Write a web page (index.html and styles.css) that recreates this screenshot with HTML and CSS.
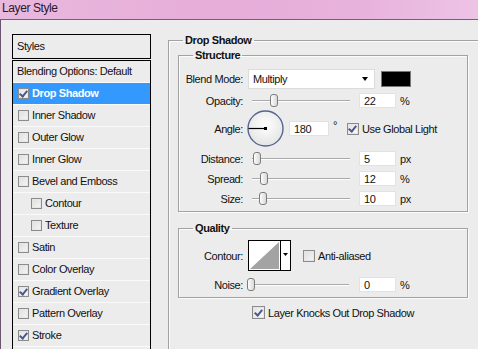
FILE: index.html
```html
<!DOCTYPE html>
<html lang="en">
<head>
    <meta charset="UTF-8">
    <title>Layer Style</title>
    <link rel="stylesheet" href="styles.css">
</head>
<body>
    <div class="window">
        <div class="titlebar">Layer Style</div>
        <div class="dialog">
            <div class="sidebar">
                <div class="styles-head">Styles</div>
                <ul class="styles-list">
                    <li>Blending Options: Default</li>
                    <li class="selected"><span class="check on"></span>Drop Shadow</li>
                    <li><span class="check"></span>Inner Shadow</li>
                    <li><span class="check"></span>Outer Glow</li>
                    <li><span class="check"></span>Inner Glow</li>
                    <li><span class="check"></span>Bevel and Emboss</li>
                    <li class="sub"><span class="check"></span>Contour</li>
                    <li class="sub"><span class="check"></span>Texture</li>
                    <li><span class="check"></span>Satin</li>
                    <li><span class="check"></span>Color Overlay</li>
                    <li><span class="check on"></span>Gradient Overlay</li>
                    <li><span class="check"></span>Pattern Overlay</li>
                    <li><span class="check on"></span>Stroke</li>
                    <li></li>
                </ul>
            </div>

            <div class="content">
                <fieldset class="group outer">
                    <legend>Drop Shadow</legend>

                    <fieldset class="group structure">
                        <legend>Structure</legend>

                        <div class="row blend-row">
                            <span class="lbl">Blend Mode:</span>
                            <div class="select">Multiply<span class="arrow"></span></div>
                            <div class="swatch"></div>
                        </div>

                        <div class="row slider-row">
                            <span class="lbl">Opacity:</span>
                            <div class="slider"><span class="thumb" style="left: 22px"></span></div>
                            <div class="field">22</div>
                            <span class="unit">%</span>
                        </div>

                        <div class="row angle-row">
                            <span class="lbl">Angle:</span>
                            <svg class="dial" width="37" height="37" viewBox="0 0 37 37">
                                <defs>
                                    <radialGradient id="dialFill" cx="50%" cy="40%" r="60%">
                                        <stop offset="0" stop-color="#ffffff"/>
                                        <stop offset="1" stop-color="#e4e4e4"/>
                                    </radialGradient>
                                </defs>
                                <circle cx="18.5" cy="18.5" r="17.5" fill="url(#dialFill)" stroke="#55658f" stroke-width="1.4"/>
                                <line x1="1.5" y1="18.5" x2="18.5" y2="18.5" stroke="#000" stroke-width="1.2"/>
                                <rect x="17" y="17" width="3" height="3" fill="#000"/>
                            </svg>
                            <div class="field wide">180</div>
                            <span class="unit deg">°</span>
                            <span class="check on"></span>
                            <span class="check-text">Use Global Light</span>
                        </div>

                        <div class="row slider-row first">
                            <span class="lbl">Distance:</span>
                            <div class="slider"><span class="thumb" style="left: 5px"></span></div>
                            <div class="field">5</div>
                            <span class="unit">px</span>
                        </div>

                        <div class="row slider-row">
                            <span class="lbl">Spread:</span>
                            <div class="slider"><span class="thumb" style="left: 12px"></span></div>
                            <div class="field">12</div>
                            <span class="unit">%</span>
                        </div>

                        <div class="row slider-row">
                            <span class="lbl">Size:</span>
                            <div class="slider"><span class="thumb" style="left: 11px"></span></div>
                            <div class="field">10</div>
                            <span class="unit">px</span>
                        </div>
                    </fieldset>

                    <fieldset class="group quality">
                        <legend>Quality</legend>

                        <div class="row contour-row">
                            <span class="lbl">Contour:</span>
                            <svg class="contour" width="43" height="31" viewBox="0 0 43 31">
                                <rect x="0.5" y="0.5" width="42" height="30" fill="#fff" stroke="#000"/>
                                <polygon points="2,29 31,2 31,29" fill="#a3a3a3"/>
                                <line x1="32.5" y1="1" x2="32.5" y2="30" stroke="#000"/>
                                <polygon points="35,13 40,13 37.5,16" fill="#000"/>
                            </svg>
                            <span class="check"></span>
                            <span class="check-text">Anti-aliased</span>
                        </div>

                        <div class="row slider-row noise-row">
                            <span class="lbl">Noise:</span>
                            <div class="slider"><span class="thumb" style="left: 0px"></span></div>
                            <div class="field">0</div>
                            <span class="unit">%</span>
                        </div>
                    </fieldset>

                    <div class="knock">
                        <span class="check big on"></span>
                        <span class="check-text">Layer Knocks Out Drop Shadow</span>
                    </div>
                </fieldset>
            </div>
        </div>
    </div>
</body>
</html>
```

FILE: styles.css
```css
html, body {
    margin: 0;
    padding: 0;
}
body {
    width: 478px;
    height: 349px;
    overflow: hidden;
    font-family: "Liberation Sans", Arial, sans-serif;
    font-size: 11px;
    letter-spacing: -0.4px;
    color: #111;
    background-color: #ececec;
}
.window {
    height: 349px;
    display: flex;
    flex-direction: column;
    overflow: hidden;
}
.titlebar {
    flex: none;
    height: 19px;
    line-height: 16px;
    padding-left: 2px;
    font-size: 12px;
    color: #2a1a2a;
    background: linear-gradient(90deg, #e9b8dd, #e6add9 45%, #e7b2dc 75%, #edc3e6);
    border-bottom: 1px solid #7b5a7c;
}
.dialog {
    flex: 1;
    display: flex;
    border-left: 1px solid #6b5470;
    background-color: #ececec;
}

/* styles list */
.sidebar {
    flex: none;
    width: 139px;
    margin: 14px 0 0 11px;
}
.styles-head {
    height: 23px;
    line-height: 23px;
    padding-left: 4px;
    border: 1px solid #000;
}
.styles-list {
    list-style: none;
    margin: 1px 0 0;
    padding: 0;
    border: 1px solid #000;
    border-bottom: none;
}
.styles-list li {
    height: 21px;
    line-height: 21px;
    padding-left: 4px;
    display: flex;
    align-items: center;
    border-bottom: 1px solid #fafafa;
    white-space: nowrap;
}
.styles-list li .check {
    margin: 0 3px 0 1px;
}
.styles-list li.sub {
    padding-left: 17px;
}
.styles-list li.selected {
    background-color: #3399ff;
    color: #fff;
    font-weight: bold;
}

/* checkbox */
.check {
    display: inline-block;
    flex: none;
    width: 11px;
    height: 11px;
    box-sizing: border-box;
    border: 1px solid #8b8b8b;
    background: linear-gradient(135deg, #dedede, #f6f6f6);
    box-shadow: inset 0 0 0 1px #e6e6e6;
}
.check.big {
    width: 13px;
    height: 13px;
}
.check.on {
    background: linear-gradient(135deg, #e2e2e2, #fbfbfb);
    position: relative;
}
.check.on::after {
    content: "";
    position: absolute;
    left: 2px;
    top: 0px;
    width: 3px;
    height: 6px;
    border: solid #4a5890;
    border-width: 0 2px 2px 0;
    transform: rotate(40deg);
}
.check.big.on::after {
    left: 3px;
    top: 1px;
}
.check-text {
    margin-left: 3px;
    white-space: nowrap;
}

/* group boxes */
.content {
    flex: none;
    margin-left: 17px;
}
.group {
    margin: 0;
    padding: 0;
    border: 1px solid #a2a2a2;
    box-shadow: inset 1px 1px 0 #fbfbfb, 1px 1px 0 #fbfbfb;
    box-sizing: border-box;
}
.group legend {
    font-weight: bold;
    line-height: 13px;
    padding: 0 2px;
}
.outer {
    width: 330px;
    height: 360px;
    margin-top: 14px;
    padding: 0 9px;
}
.outer > legend {
    margin-left: 5px;
}
.structure,
.quality {
    width: 290px;
}
.structure > legend,
.quality > legend {
    margin-left: 14px;
}
.structure {
    margin-top: 2px;
    padding: 7px 0 5px;
}
.quality {
    margin-top: 10px;
    padding: 5px 0 5px;
}

/* rows */
.row {
    display: flex;
    align-items: center;
    white-space: nowrap;
}
.lbl {
    width: 64px;
    margin-right: 5px;
    text-align: right;
}
.blend-row {
    height: 20px;
}
.select {
    width: 127px;
    height: 20px;
    box-sizing: border-box;
    padding-left: 4px;
    line-height: 19px;
    background: #fff;
    border: 1px solid #dcdcdc;
    display: flex;
    align-items: center;
}
.arrow {
    margin-left: auto;
    margin-right: 6px;
    border-left: 3.5px solid transparent;
    border-right: 3.5px solid transparent;
    border-top: 4px solid #000;
}
.swatch {
    width: 30px;
    height: 16px;
    margin-left: 6px;
    box-sizing: border-box;
    background: #000;
    border: 1px solid #777;
}
.slider-row {
    height: 15px;
    margin-top: 5px;
}
.blend-row + .slider-row {
    margin-top: 4px;
}
.slider-row.first {
    margin-top: 4px;
}
.slider {
    position: relative;
    width: 104px;
    height: 15px;
    margin-right: 7px;
}
.slider::before {
    content: "";
    position: absolute;
    left: 4px;
    right: 2px;
    top: 7px;
    height: 1px;
    background: #a9a9a9;
    border-bottom: 1px solid #fff;
}
.thumb {
    position: absolute;
    top: 1px;
    width: 8px;
    height: 13px;
    box-sizing: border-box;
    border: 1px solid #7c7c7c;
    border-radius: 3px;
    background: linear-gradient(90deg, #fdfdfd, #d9d9d9);
}
.field {
    width: 37px;
    height: 15px;
    box-sizing: border-box;
    padding-left: 4px;
    line-height: 15px;
    background: #fff;
    border: 1px solid #e2e2e2;
}
.field.wide {
    width: 40px;
}
.unit {
    margin-left: 4px;
}
.angle-row {
    height: 37px;
    margin-top: 2px;
}
.dial {
    margin-left: -1px;
    margin-right: 5px;
}
.unit.deg {
    align-self: flex-start;
    margin-top: 9px;
    margin-right: 10px;
}
.angle-row .check {
    width: 12px;
    height: 12px;
}

.contour-row {
    height: 31px;
}
.contour {
    margin-right: 12px;
}
.contour-row .check {
    width: 12px;
    height: 12px;
}
.noise-row {
    margin-top: 6px;
}
.noise-row .slider {
    margin-left: -1px;
    margin-right: 8px;
}
.noise-row .slider::before {
    left: 1px;
}
.knock {
    display: flex;
    align-items: center;
    margin-top: 8px;
    padding-left: 74px;
}
```
